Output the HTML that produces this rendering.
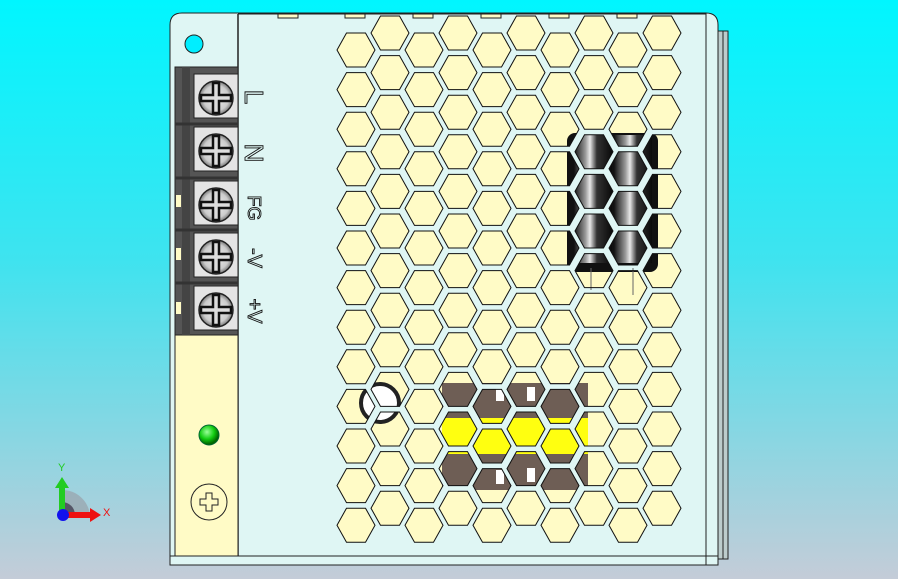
<!DOCTYPE html>
<html><head><meta charset="utf-8"><style>
html,body{margin:0;padding:0;width:898px;height:579px;overflow:hidden}
</style></head><body>
<svg width="898" height="579" viewBox="0 0 898 579" xmlns="http://www.w3.org/2000/svg" style="display:block">
<defs>
<linearGradient id="bg" x1="0" y1="0" x2="0" y2="1">
<stop offset="0" stop-color="#00f6ff"/><stop offset="0.45" stop-color="#3fe3ef"/><stop offset="1" stop-color="#c4ccd8"/>
</linearGradient>
<polygon id="h" points="-19,0 -9.5,-17 9.5,-17 19,0 9.5,17 -9.5,17"/>
<g id="colA">
<use href="#h" y="50"/><use href="#h" y="89.6"/><use href="#h" y="129.2"/><use href="#h" y="168.8"/><use href="#h" y="208.4"/><use href="#h" y="248"/><use href="#h" y="287.6"/><use href="#h" y="327.2"/><use href="#h" y="366.8"/><use href="#h" y="406.4"/><use href="#h" y="446"/><use href="#h" y="485.6"/><use href="#h" y="525.2"/>
</g>
<g id="grid">
<use href="#colA" x="356"/><use href="#colA" x="424"/><use href="#colA" x="492"/><use href="#colA" x="560"/><use href="#colA" x="628"/>
<use href="#colA" x="390" y="-17"/><use href="#colA" x="458" y="-17"/><use href="#colA" x="526" y="-17"/><use href="#colA" x="594" y="-17"/><use href="#colA" x="662" y="-17"/>
</g>
<mask id="m">
<rect x="0" y="0" width="898" height="579" fill="#000"/>
<use href="#grid" fill="#fff"/>
</mask>
<linearGradient id="cap" x1="0" y1="0" x2="1" y2="0">
<stop offset="0" stop-color="#111"/><stop offset="0.3" stop-color="#999"/><stop offset="0.42" stop-color="#e8e8e8"/><stop offset="0.6" stop-color="#333"/><stop offset="1" stop-color="#0a0a0a"/>
</linearGradient>
<radialGradient id="led" cx="0.4" cy="0.35" r="0.6"><stop offset="0" stop-color="#9f9"/><stop offset="0.6" stop-color="#1c1"/><stop offset="1" stop-color="#060"/></radialGradient>
<radialGradient id="scr" cx="0.5" cy="0.5" r="0.5"><stop offset="0" stop-color="#eee"/><stop offset="0.75" stop-color="#ccc"/><stop offset="1" stop-color="#777"/></radialGradient>
<g id="screw">
<rect x="-22" y="-24" width="44" height="44" fill="#e4e4e4" stroke="#222"/>
<circle r="17" fill="url(#scr)" stroke="#222" stroke-width="1.5"/>
<path d="M-3,-15 h6 v12 h12 v6 h-12 v12 h-6 v-12 h-12 v-6 h12z" fill="#ddd" stroke="#111" stroke-width="2.5"/>
</g>
</defs>
<rect width="898" height="579" fill="url(#bg)"/>
<!-- right side strip -->
<rect x="707" y="31" width="21" height="528" fill="#bccccc" stroke="#222"/>
<line x1="723" y1="31" x2="723" y2="559" stroke="#222"/>
<!-- box -->
<path d="M182,13 H706 Q718,13 718,25 V565 H170 V25 Q170,13 182,13Z" fill="#dff6f4" stroke="#222"/>
<line x1="706" y1="13" x2="706" y2="565" stroke="#222"/>
<line x1="170" y1="556" x2="718" y2="556" stroke="#222"/>
<!-- interior seen through holes -->
<g mask="url(#m)">
<rect x="330" y="10" width="360" height="540" fill="#fffbc6"/>
<rect x="567" y="133" width="91" height="139" rx="8" fill="#111"/>
<rect x="574" y="135" width="38" height="128" fill="url(#cap)"/>
<rect x="614" y="135" width="38" height="128" fill="url(#cap)"/>
<rect x="442" y="383" width="146" height="107" fill="#6e5e55"/>
<rect x="442" y="418" width="146" height="36" fill="#ffff10"/>
<rect x="496" y="387" width="8" height="14" fill="#fff"/><rect x="527" y="387" width="8" height="14" fill="#fff"/>
<rect x="496" y="470" width="8" height="14" fill="#fff"/><rect x="527" y="468" width="8" height="14" fill="#fff"/>
<circle cx="380" cy="403" r="19" fill="#fff" stroke="#222" stroke-width="4"/>
</g>
<line x1="591" y1="268" x2="591" y2="290" stroke="#666"/><line x1="633" y1="268" x2="633" y2="295" stroke="#666"/>
<use href="#grid" fill="none" stroke="#111" stroke-width="1"/>
<line x1="238" y1="14" x2="238" y2="556" stroke="#222" stroke-width="1.5"/>
<!-- left module -->
<circle cx="194" cy="44" r="9" fill="#00eeff" stroke="#222"/>
<rect x="175" y="335" width="63" height="221" fill="#fffbc6" stroke="#222"/>
<rect x="175" y="67" width="63" height="268" fill="#555" stroke="#222"/>
<rect x="182" y="67" width="8" height="268" fill="#444"/>
<g fill="#fffbc6"><rect x="176" y="195" width="5" height="12"/><rect x="176" y="248" width="5" height="12"/><rect x="176" y="302" width="5" height="12"/></g>
<g stroke="#333" stroke-width="3"><line x1="175" y1="124" x2="238" y2="124"/><line x1="175" y1="178" x2="238" y2="178"/><line x1="175" y1="230" x2="238" y2="230"/><line x1="175" y1="283" x2="238" y2="283"/></g>
<use href="#screw" x="216" y="98"/><use href="#screw" x="216" y="151"/><use href="#screw" x="216" y="205"/><use href="#screw" x="216" y="257"/><use href="#screw" x="216" y="310"/>
<g font-family="Liberation Sans, sans-serif" fill="#dff6f4" stroke="#111" stroke-width="0.9">
<text transform="translate(245,97) rotate(90)" font-size="26" text-anchor="middle">L</text>
<text transform="translate(245,153) rotate(90)" font-size="26" text-anchor="middle">N</text>
<text transform="translate(248,208) rotate(90)" font-size="18" text-anchor="middle">FG</text>
<text transform="translate(248,258) rotate(90)" font-size="20" text-anchor="middle">-V</text>
<text transform="translate(248,311) rotate(90)" font-size="20" text-anchor="middle">+V</text>
</g>
<circle cx="209" cy="435" r="10" fill="url(#led)" stroke="#063"/>
<circle cx="209" cy="502" r="18" fill="none" stroke="#222"/>
<path d="M206,493 h6 v6 h6 v6 h-6 v6 h-6 v-6 h-6 v-6 h6z" fill="none" stroke="#222"/>
<!-- tabs on top -->
<g fill="#fffbc6" stroke="#222"><rect x="278" y="13" width="20" height="5"/><rect x="345" y="13" width="20" height="5"/><rect x="413" y="13" width="20" height="5"/><rect x="481" y="13" width="20" height="5"/><rect x="549" y="13" width="20" height="5"/><rect x="617" y="13" width="20" height="5"/></g>
<line x1="238" y1="14" x2="706" y2="14" stroke="#222"/>
<!-- axis triad -->
<path d="M62,515 L62,490 A28,28 0 0 1 90,515Z" fill="#9aa8b0" opacity="0.8"/>
<path d="M62,515 L62,502 A13,13 0 0 1 75,515Z" fill="#556"/>
<rect x="59" y="486" width="6" height="29" fill="#2c2"/><polygon points="55,488 62,477 69,488" fill="#2c2"/>
<rect x="62" y="512" width="30" height="6" fill="#e11"/><polygon points="90,508 101,515 90,522" fill="#e11"/>
<circle cx="63" cy="515" r="6" fill="#11e"/>
<text x="58" y="471" font-family="Liberation Sans, sans-serif" font-size="11" fill="#2c2">Y</text>
<text x="103" y="516" font-family="Liberation Sans, sans-serif" font-size="11" fill="#e11">X</text>
</svg>
</body></html>
